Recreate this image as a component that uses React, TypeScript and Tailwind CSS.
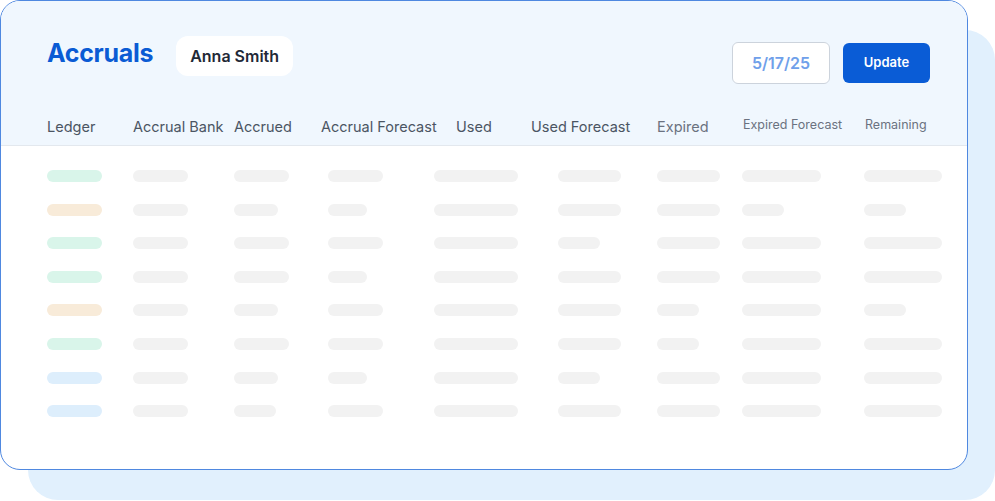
import React from "react";

const G = "bg-[#f2f2f2]";
const rowColors = ["bg-[#d9f5ea]", "bg-[#f8ebd9]", "bg-[#d9f5ea]", "bg-[#d9f5ea]", "bg-[#f8ebd9]", "bg-[#d9f5ea]", "bg-[#ddeefc]", "bg-[#ddeefc]"];
const cellW = [86, 101, 94, 106, 124, 99, 85, 122, 90];
const widths = [
  [55, 55, 55, 55, 84, 63, 63, 79, 78],
  [55, 55, 44, 39, 84, 63, 63, 42, 42],
  [55, 55, 55, 55, 84, 42, 63, 79, 78],
  [55, 55, 55, 39, 84, 63, 63, 79, 78],
  [55, 55, 44, 55, 84, 63, 42, 79, 42],
  [55, 55, 55, 55, 84, 63, 42, 79, 78],
  [55, 55, 44, 39, 84, 42, 63, 79, 78],
  [55, 55, 42, 55, 84, 63, 63, 79, 78],
];
const headers: [string, number, string][] = [
  ["Ledger", 86, "text-[14.5px]"],
  ["Accrual Bank", 101, "text-[14.5px]"],
  ["Accrued", 87, "text-[14.5px]"],
  ["Accrual Forecast", 135, "text-[14.5px]"],
  ["Used", 75, "text-[14.5px]"],
  ["Used Forecast", 126, "text-[14.5px]"],
  ["Expired", 86, "text-[14.5px] text-[#6b7280]"],
  ["Expired Forecast", 122, "text-[12.5px] text-[#6b7280] -mt-1"],
  ["Remaining", 90, "text-[12.5px] text-[#6b7280] -mt-1"],
];

export default function App() {
  return (
    <div className="relative w-[995px] h-[501px] bg-white overflow-hidden" style={{ fontFamily: "Inter, 'Noto Sans', sans-serif" }}>
      <div className="absolute left-[28px] top-[30px] w-[967px] h-[470px] rounded-[30px] bg-[#e1f0fd]" />
      <div className="relative w-[968px] h-[470px] rounded-[20px] border border-[#4f88e0] bg-white overflow-hidden">
        <div className="bg-[#f0f7fe] h-[145px] border-b border-[#e3e8ee] px-[46px]">
          <div className="flex items-center pt-[27px]">
            <div className="text-[25px] font-bold text-[#0a5bd4] tracking-[-0.3px] leading-none -mt-[6px]">Accruals</div>
            <div className="ml-[23px] h-[40px] px-[14px] flex items-center rounded-[12px] bg-white text-[16px] font-semibold text-[#1f2937]">Anna Smith</div>
            <div className="ml-auto mr-[-9px] flex items-center gap-[13px] mt-[14px]">
              <div className="w-[98px] h-[42px] rounded-[6px] border border-[#ccd3dc] bg-white flex items-center justify-center text-[16px] font-semibold text-[#6fa0ea]">5/17/25</div>
              <div className="w-[87px] h-[40px] rounded-[6px] bg-[#0a5cd6] flex items-center justify-center text-[13px] font-semibold text-white">Update</div>
            </div>
          </div>
          <div className="flex items-center mt-[32px] text-[#4b5563]">
            {headers.map(([t, w, c]) => (
              <div key={t} className={`shrink-0 whitespace-nowrap ${c}`} style={{ width: w }}>{t}</div>
            ))}
          </div>
        </div>
        <div className="px-[46px] pt-[24px] flex flex-col gap-[21.6px]">
          {widths.map((row, r) => (
            <div key={r} className="flex h-[12px]">
              {row.map((w, i) => (
                <div key={i} className="shrink-0" style={{ width: cellW[i] }}>
                  <div className={`h-[12px] rounded-full ${i === 0 ? rowColors[r] : G}`} style={{ width: w }} />
                </div>
              ))}
            </div>
          ))}
        </div>
      </div>
    </div>
  );
}
